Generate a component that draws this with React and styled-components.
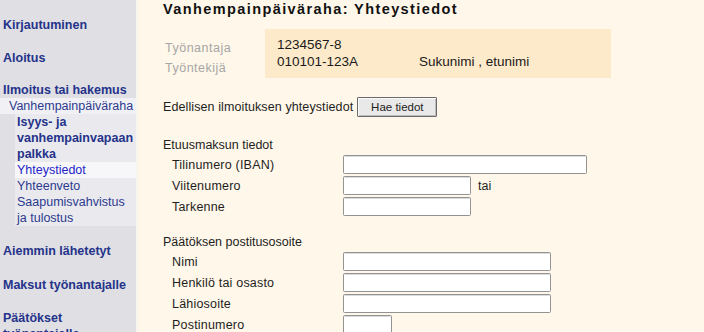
import React from "react";
import styled, { createGlobalStyle } from "styled-components";

const Global = createGlobalStyle`
  html, body { margin: 0; padding: 0; background: #fff7e9; }
  body { font-family: "Liberation Sans", Arial, sans-serif; }
  * { box-sizing: border-box; }
`;

const Page = styled.div`
  display: flex;
  width: 704px;
  height: 332px;
  overflow: hidden;
  background: #fff7e9;
`;

const Sidebar = styled.nav`
  width: 138px;
  flex: none;
  background: #dfdfe4;
  border-right: 2px solid #f8f5ef;
  padding-top: 17px;
  font-size: 12.5px;
  line-height: 16px;
`;

const NavTop = styled.div`
  font-weight: bold;
  color: #25338a;
  padding-left: 3px;
  margin-top: ${(p) => p.$gap ?? 17}px;
  white-space: nowrap;
`;

const NavSub = styled.div`
  color: #2d3a8e;
  padding-left: 9px;
  background: #f1f1f5;
  white-space: nowrap;
`;

const SubBlock = styled.div`
  margin-left: 15px;
  background: #e9e9ee;
`;

const SubItem = styled.div`
  padding-left: 2px;
  white-space: nowrap;
  font-weight: ${(p) => (p.$bold ? "bold" : "normal")};
  color: ${(p) => (p.$active ? "#2424c6" : p.$bold ? "#25338a" : "#2d3a8e")};
  background: ${(p) => (p.$active ? "#f7f7fa" : "transparent")};
`;

const Main = styled.main`
  flex: 1;
  padding-left: 25px;
  color: #1e1e1e;
  font-size: 12.5px;
`;

const Title = styled.h1`
  margin: 0;
  font-size: 14.5px;
  line-height: 18px;
  font-weight: bold;
  letter-spacing: 1.4px;
  color: #111;
`;

const InfoRow = styled.div`
  display: flex;
  margin-top: 11px;
`;

const InfoLabels = styled.div`
  width: 102px;
  padding-top: 9px;
  padding-left: 2px;
  color: #a6a6a6;
  font-size: 12.5px;
  line-height: 20px;
  letter-spacing: 0.5px;
`;

const InfoBox = styled.div`
  width: 346px;
  height: 49px;
  background: #fdeaca;
  padding: 7px 0 0 12px;
  font-size: 13.5px;
  line-height: 17px;
  color: #1a1a1a;
`;

const InfoLine = styled.div`
  display: flex;
`;

const InfoId = styled.span`
  width: 142px;
`;

const FetchRow = styled.div`
  display: flex;
  align-items: center;
  gap: 4px;
  margin-top: 19px;
  letter-spacing: 0.1px;
`;

const Button = styled.button`
  width: 80px;
  height: 20px;
  padding: 0;
  font-family: "Liberation Sans", Arial, sans-serif;
  font-size: 11.5px;
  color: #222;
  background: #e9e9e9;
  border: 1px solid #6a6a6a;
  box-shadow: inset 1px 1px 0 #fafafa, inset -1px -1px 0 #bdbdbd;
  border-radius: 1px;
`;

const Section = styled.section`
  margin-top: ${(p) => p.$gap}px;
`;

const SectionTitle = styled.div`
  line-height: 16px;
`;

const Row = styled.div`
  display: flex;
  align-items: center;
  height: 21px;
  padding-top: 1px;
`;

const Label = styled.div`
  width: 180px;
  padding-left: 9px;
  padding-top: 2px;
  letter-spacing: 0.2px;
`;

const Input = styled.div`
  width: ${(p) => p.$w}px;
  height: 19px;
  background: #fff;
  border: 1px solid #939393;
  box-shadow: inset 0 1px 0 #dcdcdc;
  border-radius: 1.5px;
`;

const After = styled.span`
  margin-left: 7px;
  padding-top: 2px;
`;

export default function App() {
  return (
    <>
      <Global />
      <Page>
        <Sidebar>
          <NavTop $gap={0}>Kirjautuminen</NavTop>
          <NavTop>Aloitus</NavTop>
          <NavTop $gap={16}>Ilmoitus tai hakemus</NavTop>
          <NavSub>Vanhempainpäiväraha</NavSub>
          <SubBlock>
            <SubItem $bold>Isyys- ja</SubItem>
            <SubItem $bold>vanhempainvapaan</SubItem>
            <SubItem $bold>palkka</SubItem>
            <SubItem $active>Yhteystiedot</SubItem>
            <SubItem>Yhteenveto</SubItem>
            <SubItem>Saapumisvahvistus</SubItem>
            <SubItem>ja tulostus</SubItem>
          </SubBlock>
          <NavTop $gap={17}>Aiemmin lähetetyt</NavTop>
          <NavTop $gap={18}>Maksut työnantajalle</NavTop>
          <NavTop $gap={17}>
            Päätökset
            <br />
            työnantajalle
          </NavTop>
        </Sidebar>
        <Main>
          <Title>Vanhempainpäiväraha: Yhteystiedot</Title>
          <InfoRow>
            <InfoLabels>
              <div>Työnantaja</div>
              <div>Työntekijä</div>
            </InfoLabels>
            <InfoBox>
              <InfoLine>1234567-8</InfoLine>
              <InfoLine>
                <InfoId>010101-123A</InfoId>
                <span>Sukunimi , etunimi</span>
              </InfoLine>
            </InfoBox>
          </InfoRow>
          <FetchRow>
            <span>Edellisen ilmoituksen yhteystiedot</span>
            <Button type="button">Hae tiedot</Button>
          </FetchRow>
          <Section $gap={20}>
            <SectionTitle>Etuusmaksun tiedot</SectionTitle>
            <Row>
              <Label>Tilinumero (IBAN)</Label>
              <Input $w={244} />
            </Row>
            <Row>
              <Label>Viitenumero</Label>
              <Input $w={128} />
              <After>tai</After>
            </Row>
            <Row>
              <Label>Tarkenne</Label>
              <Input $w={128} />
            </Row>
          </Section>
          <Section $gap={18}>
            <SectionTitle>Päätöksen postitusosoite</SectionTitle>
            <Row>
              <Label>Nimi</Label>
              <Input $w={208} />
            </Row>
            <Row>
              <Label>Henkilö tai osasto</Label>
              <Input $w={208} />
            </Row>
            <Row>
              <Label>Lähiosoite</Label>
              <Input $w={208} />
            </Row>
            <Row>
              <Label>Postinumero</Label>
              <Input $w={49} />
            </Row>
          </Section>
        </Main>
      </Page>
    </>
  );
}
